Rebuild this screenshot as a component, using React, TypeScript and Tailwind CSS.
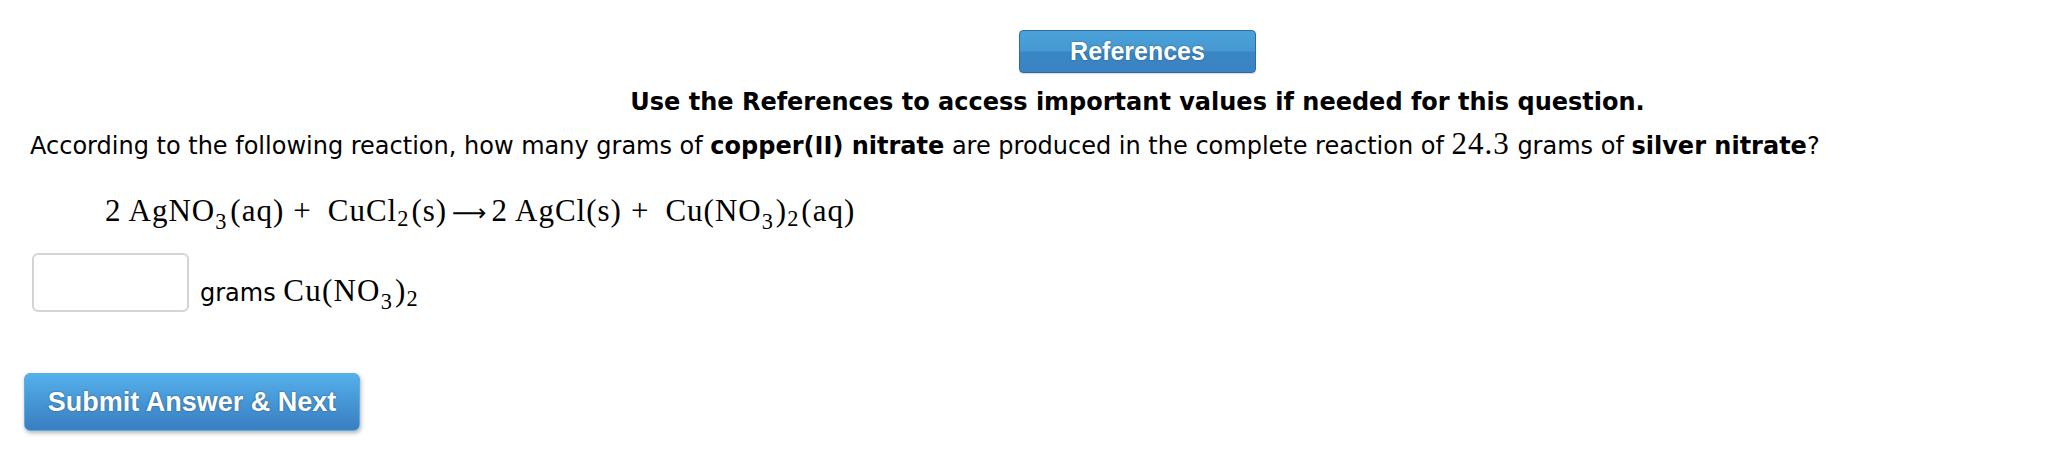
import React from 'react';

const sans = "font-['DejaVu_Sans',Verdana,sans-serif]";
const serif = "font-['Liberation_Serif','Times_New_Roman',serif]";

function Sub({ children, low = false }: { children: React.ReactNode; low?: boolean }) {
  return (
    <span className={`relative text-[0.72em] leading-none ${low ? 'top-[0.36em]' : 'top-[0.24em]'}`}>
      {children}
    </span>
  );
}

export default function App() {
  return (
    <div className="w-full h-[461px] bg-white text-black overflow-hidden">
      {/* reference button + instruction, centred a bit right of the page */}
      <div className="flex flex-col items-center pl-[216px] pt-[30px]">
        <button className="w-[237px] h-[43px] rounded-[4px] border border-[#2c6ba6] bg-[linear-gradient(to_bottom,#4ba2d9_0%,#4599d2_48%,#3a86c5_52%,#3a83c2_100%)] text-white font-['Liberation_Sans',Arial,sans-serif] font-bold text-[25px] leading-none [text-shadow:0_0_2px_rgba(0,0,0,0.4)] shadow-[0_1px_1px_rgba(0,0,0,0.15)]">
          References
        </button>
        <p className={`${sans} font-bold text-[24px] leading-[28px] mt-[15px]`}>
          Use the References to access important values if needed for this question.
        </p>
      </div>

      <p className={`${sans} text-[24px] leading-[28px] mt-[14px] pl-[30px] whitespace-nowrap`}>
        According to the following reaction, how many grams of <b>copper(II) nitrate</b> are produced in the complete
        reaction of <span className={`${serif} text-[31px] tracking-[1px]`}>24.3</span> grams of <b>silver nitrate</b>?
      </p>

      <div className={`${serif} text-[31px] leading-[36px] tracking-[1px] mt-[33px] pl-[105px] whitespace-nowrap`}>
        2 AgNO<Sub low>3</Sub>
        <span className="ml-[3px]">(aq)</span>
        <span className="mx-[9px]">+</span>
        <span className="ml-[7px]">CuCl</span>
        <Sub>2</Sub>
        <span className="ml-[2px]">(s)</span>
        <span className="mx-[5px] font-['DejaVu_Sans',sans-serif] text-[24px] tracking-normal">⟶</span>2 AgCl(s)
        <span className="mx-[9px]">+</span>
        <span className="ml-[7px]">Cu(NO</span>
        <Sub low>3</Sub>
        <span className="ml-[2px]">)</span>
        <Sub>2</Sub>
        <span className="ml-[2px]">(aq)</span>
      </div>

      <div className="flex items-end mt-[22px] pl-[32px]">
        <input
          type="text"
          className="w-[157px] h-[59px] rounded-[6px] border-2 border-[#d4d4d4] bg-white outline-none"
        />
        <span className={`${sans} text-[24px] leading-[28px] ml-[11px] mb-[5px] whitespace-nowrap`}>
          grams{' '}
          <span className={`${serif} text-[31px] tracking-[1.2px]`}>
            Cu(NO<Sub low>3</Sub>
            <span className="ml-[2px]">)</span>
            <Sub>2</Sub>
          </span>
        </span>
      </div>

      <button className="ml-[24px] mt-[61px] w-[336px] h-[58px] rounded-[6px] border border-[#5aaee6] bg-[linear-gradient(to_bottom,#56b0ea_0%,#4596d6_50%,#3a7ec0_100%)] text-white font-['Liberation_Sans',Arial,sans-serif] font-bold text-[27px] leading-none [text-shadow:0_0_2px_rgba(0,0,0,0.45)] shadow-[1px_2px_4px_rgba(0,0,0,0.3)]">
        Submit Answer &amp; Next
      </button>
    </div>
  );
}
